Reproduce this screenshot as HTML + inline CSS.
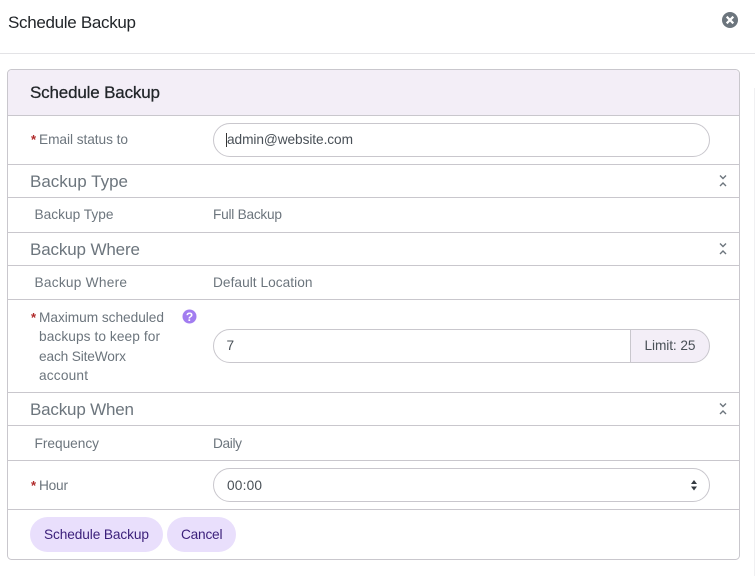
<!DOCTYPE html>
<html><head><meta charset="utf-8"><style>
html,body{margin:0;padding:0;background:#fff;width:755px;height:576px;overflow:hidden}
svg{display:block;font-family:"Liberation Sans",sans-serif}
.l{font-size:13.7px;fill:#6c757d}
.h{font-size:17px;fill:#6c757d}
.v{font-size:13.7px;fill:#495057}
.b{font-size:13.7px;fill:#3b1f7a}
.s{font-size:13px;fill:#b02a2a;font-weight:bold}
.c{fill:none;stroke:#6c757d;stroke-width:1.4}
</style></head><body>
<svg width="755" height="576" viewBox="0 0 755 576" xmlns="http://www.w3.org/2000/svg">
<rect width="755" height="576" fill="#fff"/>
<rect x="0" y="53" width="755" height="1" fill="#e3e3e6"/>
<rect x="754" y="88" width="1" height="488" fill="#f0f0f2"/>
<text x="8" y="28" font-size="17" fill="#212529" textLength="128" lengthAdjust="spacing">Schedule Backup</text>
<circle cx="730" cy="20" r="8" fill="#6c757d"/>
<path d="M726.700 16.700l6.600 6.600M733.300 16.700l-6.600 6.600" stroke="#fff" stroke-width="2.200"/>

<rect x="7.500" y="69.500" width="732" height="490" rx="4" fill="#fff" stroke="#c9c7cd"/>
<path d="M8 115V74a4 4 0 0 1 4-4H735a4 4 0 0 1 4 4V115Z" fill="#f3eef7"/>
<g fill="#c9c7cd">
<rect x="8" y="115" width="731" height="1"/>
<rect x="8" y="164" width="731" height="1"/>
<rect x="8" y="197" width="731" height="1"/>
<rect x="8" y="232" width="731" height="1"/>
<rect x="8" y="265" width="731" height="1"/>
<rect x="8" y="299" width="731" height="1"/>
<rect x="8" y="392" width="731" height="1"/>
<rect x="8" y="425" width="731" height="1"/>
<rect x="8" y="460" width="731" height="1"/>
<rect x="8" y="509" width="731" height="1"/>
</g>
<text x="30" y="98" font-size="17" fill="#212529" stroke="#212529" stroke-width=".25" textLength="130" lengthAdjust="spacing">Schedule Backup</text>

<text class="s" x="31" y="144">*</text>
<text class="l" x="39" y="144" textLength="89" lengthAdjust="spacing">Email status to</text>
<rect x="213.500" y="123.500" width="496" height="33" rx="16.500" fill="#fff" stroke="#c9c7cd"/>
<rect x="226" y="133" width="1" height="14" fill="#333"/>
<text class="v" x="227" y="144" textLength="126" lengthAdjust="spacing">admin@website.com</text>

<text class="h" x="30" y="187" textLength="98" lengthAdjust="spacing">Backup Type</text>
<path class="c" d="M720 175.500l3 3 3-3M720 186l3-3 3 3"/>
<text class="l" x="34.500" y="219" textLength="79" lengthAdjust="spacing">Backup Type</text>
<text class="l" x="213" y="219" textLength="69" lengthAdjust="spacing">Full Backup</text>

<text class="h" x="30" y="255" textLength="110" lengthAdjust="spacing">Backup Where</text>
<path class="c" d="M720 243.500l3 3 3-3M720 254l3-3 3 3"/>
<text class="l" x="34.500" y="287" textLength="92.500" lengthAdjust="spacing">Backup Where</text>
<text class="l" x="213" y="287" textLength="99.500" lengthAdjust="spacing">Default Location</text>

<text class="s" x="31" y="322">*</text>
<text class="l" x="39" y="322" textLength="125" lengthAdjust="spacing">Maximum scheduled</text>
<text class="l" x="39" y="341" textLength="121" lengthAdjust="spacing">backups to keep for</text>
<text class="l" x="39" y="361" textLength="87" lengthAdjust="spacing">each SiteWorx</text>
<text class="l" x="39" y="380" textLength="49" lengthAdjust="spacing">account</text>
<circle cx="189.500" cy="316.500" r="7" fill="#a27df0"/>
<text x="189.500" y="321" font-size="12" font-weight="bold" fill="#fff" text-anchor="middle">?</text>
<path d="M630.500 329.500H693a16.500 16.500 0 0 1 0 33H630.500Z" fill="#f3eef7"/>
<rect x="213.500" y="329.500" width="496" height="33" rx="16.500" fill="none" stroke="#c9c7cd"/>
<rect x="630" y="330" width="1" height="33" fill="#c9c7cd"/>
<text class="v" x="226.500" y="350" textLength="7.500" lengthAdjust="spacing">7</text>
<text class="v" x="644.500" y="350" textLength="51" lengthAdjust="spacing">Limit: 25</text>

<text class="h" x="30" y="415" textLength="104" lengthAdjust="spacing">Backup When</text>
<path class="c" d="M720 403.500l3 3 3-3M720 414l3-3 3 3"/>
<text class="l" x="34.500" y="448" textLength="64.500" lengthAdjust="spacing">Frequency</text>
<text class="l" x="213" y="448" textLength="29" lengthAdjust="spacing">Daily</text>

<text class="s" x="31" y="490">*</text>
<text class="l" x="39" y="490" textLength="29" lengthAdjust="spacing">Hour</text>
<rect x="213.500" y="468.500" width="496" height="33" rx="16.500" fill="#fff" stroke="#c9c7cd"/>
<text class="v" x="227" y="490" textLength="35" lengthAdjust="spacing">00:00</text>
<path d="M691 484l3-4 3 4ZM691 486.500l3 4 3-4Z" fill="#343a40"/>

<rect x="30" y="517" width="133" height="35" rx="17.500" fill="#e9dffc"/>
<rect x="167" y="517" width="69" height="35" rx="17.500" fill="#e9dffc"/>
<text class="b" x="44" y="539" textLength="105" lengthAdjust="spacing">Schedule Backup</text>
<text class="b" x="181" y="539" textLength="41.500" lengthAdjust="spacing">Cancel</text>
</svg>
</body></html>
